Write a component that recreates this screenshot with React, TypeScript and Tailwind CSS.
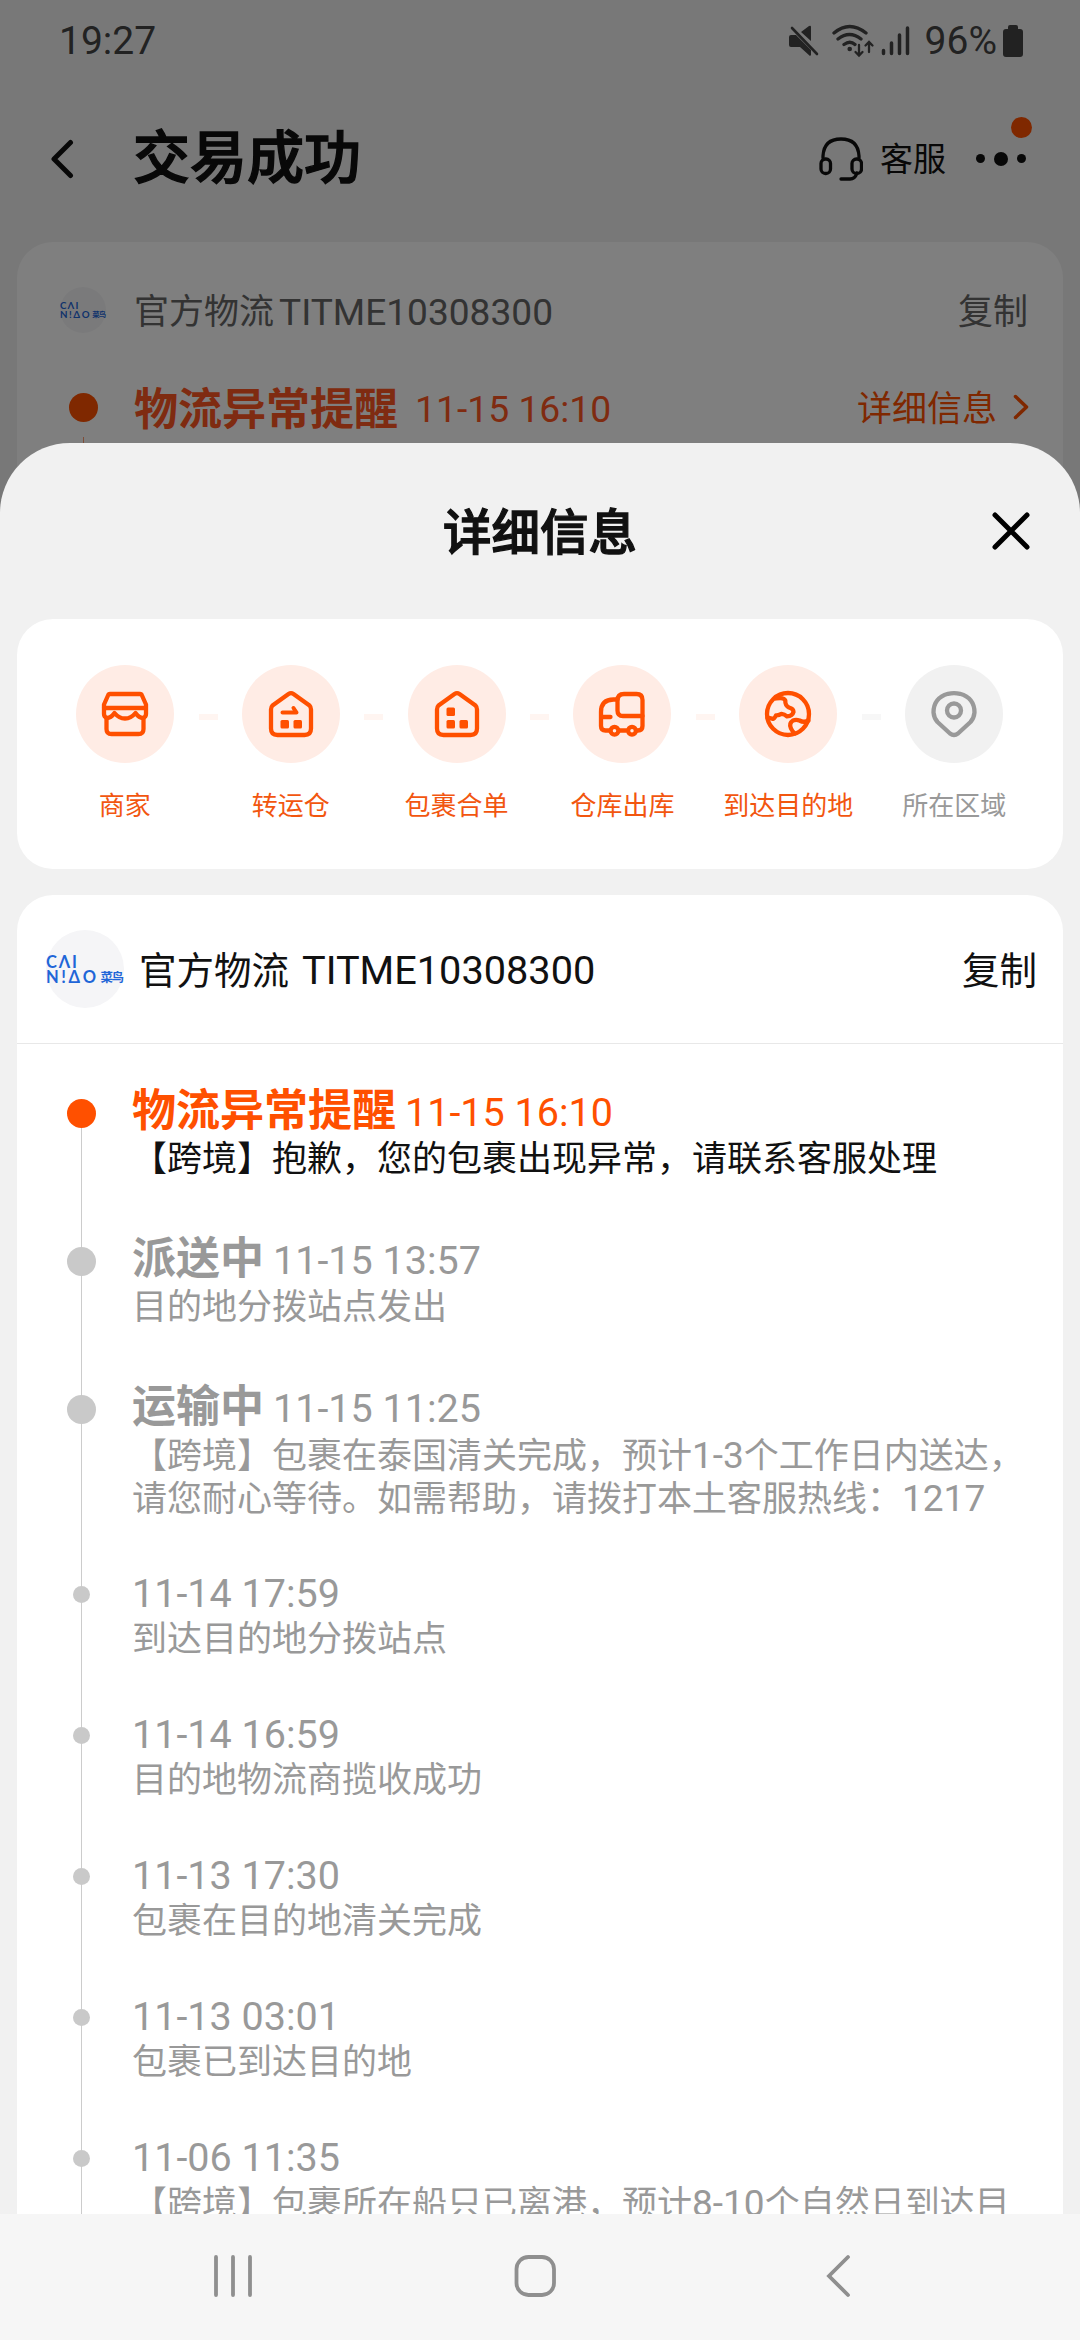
import type { ReactNode } from "react";

const steps = [
  { label: "商家", icon: "shop" },
  { label: "转运仓", icon: "transfer" },
  { label: "包裹合单", icon: "merge" },
  { label: "仓库出库", icon: "truck" },
  { label: "到达目的地", icon: "globe" },
  { label: "所在区域", icon: "pin" },
];

type LogItem = {
  title?: string;
  time: string;
  lines: ReactNode[];
  active?: boolean;
};

const Num = ({ children }: { children: ReactNode }) => (
  <span className="text-[37px]">{children}</span>
);

const logs: LogItem[] = [
  {
    title: "物流异常提醒",
    time: "11-15 16:10",
    lines: ["【跨境】抱歉，您的包裹出现异常，请联系客服处理"],
    active: true,
  },
  { title: "派送中", time: "11-15 13:57", lines: ["目的地分拨站点发出"] },
  {
    title: "运输中",
    time: "11-15 11:25",
    lines: [
      <>【跨境】包裹在泰国清关完成，预计<Num>1-3</Num>个工作日内送达，</>,
      <>请您耐心等待。如需帮助，请拨打本土客服热线：<Num>1217</Num></>,
    ],
  },
  { time: "11-14 17:59", lines: ["到达目的地分拨站点"] },
  { time: "11-14 16:59", lines: ["目的地物流商揽收成功"] },
  { time: "11-13 17:30", lines: ["包裹在目的地清关完成"] },
  { time: "11-13 03:01", lines: ["包裹已到达目的地"] },
  {
    time: "11-06 11:35",
    lines: [<>【跨境】包裹所在船只已离港，预计<Num>8-10</Num>个自然日到达目</>],
  },
];

const StepIcon = ({ name }: { name: string }) => (
  <svg
    viewBox="0 0 48 48"
    className="size-12"
    fill="none"
    stroke="currentColor"
    strokeWidth="4.3"
    strokeLinejoin="round"
    strokeLinecap="round"
  >
    {name === "shop" && (
      <>
        <path d="M9 4h30q1.500 0 2 1.500L45 14.500V18H3V14.500L7 5.500Q7.500 4 9 4z" />
        <path d="M3 18v6q0 3 3 4 4 0 7.500-5 4.500 5.500 10.500 5.500T34.500 23q3.500 5 7.500 5 3-1 3-4V18" />
        <path d="M5.500 28v11q0 5 5 5h27q5 0 5-5V28" />
      </>
    )}
    {(name === "transfer" || name === "merge") && (
      <>
        <path d="M21.500 4Q24 2.300 26.500 4L42.500 15.500Q44 17 44 19.500V38.500q0 6.500-6.500 6.500h-27Q4 45 4 38.500V19.500Q4 17 5.500 15.500z" />
        <g fill="currentColor" stroke="none">
          <rect x="13.500" y="30" width="8.500" height="8.500" rx="1.500" />
          <rect x="26.500" y="30" width="8.500" height="8.500" rx="1.500" />
          {name === "merge" && <rect x="13.500" y="17.500" width="8.500" height="8.500" rx="1.500" />}
        </g>
        {name === "transfer" && <path d="M15.500 22.500H29.500L26.500 18" strokeWidth="4" />}
      </>
    )}
    {name === "truck" && (
      <>
        <path d="M11.500 40.500H7.500q-4.500 0-4.500-4.500V22Q3 9.500 15.500 9.500H19.500" />
        <path d="M26 4H38.500q6 0 6 6V26H25q-5.500 0-5.500-5.500V10.500Q19.500 4 26 4z" />
        <path d="M44.500 26v10q0 4.500-4.500 4.500h-2M21 40.500h7M4 27h8.500" />
        <circle cx="16.500" cy="40.800" r="3.900" />
        <circle cx="34" cy="40.800" r="3.900" />
      </>
    )}
    {name === "globe" && (
      <>
        <circle cx="24" cy="24" r="21" />
        <path d="M12 8.500Q20 7 21.300 10.500 21 15.500 25 17.500 29.500 18.500 29.500 22 28.500 26 23 26.300 20.500 24 17.500 23.800 15 25.500 12 25.300 10.500 28.500 9 28.800L3.500 27.500M44.500 30.500Q40 33 35.500 30.500 32 29.300 29 30.500 24.500 33.500 27 38.500 28.500 42 31 43.500" />
      </>
    )}
    {name === "pin" && (
      <>
        <path d="M18 3.800Q24 2.300 30 3.800 44.500 8 44.500 22.500 44 28 40.500 32L28 43.500q-4 3-8 0L7.500 32Q4 28 3.500 22.500 3.500 8 18 3.800z" />
        <circle cx="24" cy="20.500" r="7" />
      </>
    )}
  </svg>
);

const Logo = ({ className }: { className: string }) => (
  <div className={`shrink-0 rounded-full bg-[#f5f5f7] ${className}`}>
    <svg viewBox="0 0 78 78" className="size-full overflow-visible font-[Lato,'Noto_Sans_CJK_SC',sans-serif] font-bold" fill="#1f66d8">
      <text x="0" y="38" fontSize="16.500" textLength="31">CΛI</text>
      <text x="0" y="52.700" fontSize="16.500" textLength="50">N!ΔO</text>
      <text x="54.500" y="51.500" fontSize="12.500" textLength="23.500">菜鸟</text>
    </svg>
  </div>
);

const StatusBar = () => (
  <div className="flex h-[81px] items-center justify-between pr-[56px] pl-[59px] text-[39px] text-[#444]">
    <span className="pt-px">19:27</span>
    <div className="flex items-center">
      <svg viewBox="0 0 124 34" className="mr-[13px] h-[34px] w-[124px]" fill="none" stroke="currentColor" strokeWidth="3.300" strokeLinecap="round">
        <g fill="currentColor" stroke="none">
          <path d="M3 11h5l15 15v5l-1 1-10-9H3q-2 0-2-2v-8q0-2 2-2zM13 8l8-6q2-1 2 1v14z" />
        </g>
        <path d="M4 4l25 26" strokeWidth="2.600" />
        <path d="M46 9q15.500-13 32 0M50 15q11.500-9 23 0M56 20.500q6-4.500 11 0" />
        <circle cx="61.700" cy="25" r="2.300" fill="currentColor" stroke="none" />
        <path d="M71 21v10M67.500 28l3.500 3.500 3.500-3.500M81 28V19M77.500 21.500L81 18l3.500 3.500" strokeWidth="2.300" />
        <path d="M95.500 26.500v3M103.500 19v10.500M111.500 11v18.500M119.500 4v25.500" strokeWidth="3.500" />
      </svg>
      <span className="pt-px">96%</span>
      <svg viewBox="0 0 22 34" className="ml-[5px] h-[34px] w-[22px]" fill="currentColor">
        <path d="M6 3q0-2 2-2h6q2 0 2 2v2h2q3 0 3 3v22q0 3-3 3H4q-3 0-3-3V8q0-3 3-3h2z" />
      </svg>
    </div>
  </div>
);

const OrderPage = () => (
  <div className="h-full bg-[#f1f1f1]">
    <StatusBar />
    <header className="flex h-[161px] items-start pr-[54px] pl-[50px] text-[#111]">
      <div className="flex h-[155px] w-full items-center">
        <svg viewBox="0 0 24 40" className="h-10 w-6" fill="none" stroke="currentColor" strokeWidth="5" strokeLinecap="round" strokeLinejoin="round">
          <path d="M20.500 3.500L4 20l16.500 16.500" />
        </svg>
        <h1 className="ml-[59px] text-[57px] leading-none font-medium [-webkit-text-stroke:1.4px]">交易成功</h1>
        <div className="relative ml-auto flex items-center">
          <svg viewBox="0 0 44 44" className="size-11" fill="none" stroke="currentColor" strokeWidth="3.300" strokeLinecap="round">
            <path d="M4 21v-2Q5 2 22 2t18 17v2M38 36q-2 6-7 6H22" />
            <rect x="2" y="22" width="9.500" height="14.500" rx="4.500" />
            <rect x="33" y="22" width="9.500" height="14.500" rx="4.500" />
          </svg>
          <span className="ml-[17px] pt-0.5 text-[33px] leading-none">客服</span>
          <div className="ml-[30px] flex items-center gap-[9px]">
            <i className="size-[9px] rounded-full bg-[#111]" />
            <i className="size-[14px] rounded-full bg-[#111]" />
            <i className="size-[9px] rounded-full bg-[#111]" />
          </div>
          <i className="absolute -top-[20px] -right-[6px] size-[21px] rounded-full bg-[#ff5000]" />
        </div>
      </div>
    </header>
    <section className="mx-[17px] h-80 rounded-[36px] bg-white pt-[45px] pr-[35px] pl-[43px]">
      <div className="flex h-[46px] items-center text-[35px] text-[#666]">
        <Logo className="size-[46px]" />
        <span className="ml-[28px] pt-1.5">官方物流</span>
        <span className="ml-[5px] pt-1.5 text-[37.100px]">TITME10308300</span>
        <span className="ml-auto pt-1.5">复制</span>
      </div>
      <div className="mt-[44px] flex h-[60px] items-center text-[#ff5722]">
        <i className="ml-[9px] size-[29px] rounded-full bg-[#ff5000]" />
        <span className="ml-[36px] pt-1.5 text-[44px] font-bold">物流异常提醒</span>
        <span className="ml-[17px] pt-1.5 text-[37.300px]">11-15 16:10</span>
        <span className="ml-auto pt-1.5 text-[35px] text-[#ff5000]">详细信息</span>
        <svg viewBox="0 0 16 26" className="mr-[-1px] ml-[16px] h-[26px] w-4" fill="none" stroke="#ff5000" strokeWidth="3.500" strokeLinecap="round" strokeLinejoin="round">
          <path d="M2.500 2.500L13.500 13l-11 10.500" />
        </svg>
      </div>
      <div className="ml-[23px] h-20 w-px bg-[#ff9a70]" />
    </section>
  </div>
);

const Steps = () => (
  <section className="mx-[17px] flex h-[250px] shrink-0 justify-between rounded-[36px] bg-white pt-[46px] pr-[26px] pl-[25px]">
    {steps.map((step, i) => {
      const last = i === steps.length - 1;
      return (
        <div
          key={step.label}
          className={`relative flex w-[165.600px] flex-col items-center ${last ? "text-[#999]" : "text-[#ff5000]"}`}
        >
          <div className={`flex size-[98px] items-center justify-center rounded-full ${last ? "bg-[#f1f1f1]" : "bg-[#ffece5]"}`}>
            <StepIcon name={step.icon} />
          </div>
          <span className={`mt-[24px] text-[26px] leading-[38px] whitespace-nowrap ${last ? "" : "text-[#f2560f]"}`}>{step.label}</span>
          {!last && (
            <i className={`absolute top-[49px] -right-[10px] h-1.5 w-[19px] ${i === 4 ? "bg-[#f7f7f7]" : "bg-[#fff5f1]"}`} />
          )}
        </div>
      );
    })}
  </section>
);

const Timeline = () => (
  <div className="relative pt-[41px]">
    <div className="absolute top-[70px] bottom-0 left-[64px] w-px bg-[#ccc]" />
    {logs.map((log) => (
      <div key={log.time} className="relative flex pb-[52px]">
        <div className={`ml-[50px] flex w-[29px] shrink-0 items-center justify-center ${log.title ? "h-[57px]" : "h-[45px]"}`}>
          <i
            className={`rounded-full ${log.title ? "size-[29px]" : "size-[17px]"} ${log.active ? "bg-[#ff5000]" : "bg-[#c9c9c9]"}`}
          />
        </div>
        <div className={`ml-[36px] whitespace-nowrap ${log.active ? "text-[#ff5000]" : "text-[#999]"}`}>
          <div className={`flex items-baseline ${log.title ? "h-[53px] leading-[52px]" : "h-[46px] leading-[43px]"}`}>
            {log.title && <b className="mr-[9px] text-[44px]">{log.title}</b>}
            <span className="text-[39.500px]">{log.time}</span>
          </div>
          {log.lines.map((line, i) => (
            <p key={i} className={`h-[43px] text-[35px] leading-[43px] ${log.active ? "text-[#111]" : ""}`}>
              {line}
            </p>
          ))}
        </div>
      </div>
    ))}
  </div>
);

const DetailSheet = () => (
  <div className="absolute inset-x-0 top-[443px] bottom-[126px] flex flex-col overflow-hidden rounded-t-[70px] bg-[#f1f1f1]">
    <div className="relative flex h-[176px] shrink-0 items-center justify-center text-[#111]">
      <h2 className="pt-1.5 text-[48.500px] font-medium [-webkit-text-stroke:1.3px]">详细信息</h2>
      <svg viewBox="0 0 38 38" className="absolute top-[69px] right-[50px] size-[38px]" stroke="#000" strokeWidth="5" strokeLinecap="round">
        <path d="M3 3l32 32M35 3L3 35" />
      </svg>
    </div>
    <Steps />
    <section className="mx-[17px] mt-[26px] rounded-t-[36px] bg-white">
      <div className="flex h-[149px] items-center border-b border-[#e8e8e8] pr-[26px] pl-[29px] text-[37.500px] text-[#111]">
        <Logo className="size-[78px]" />
        <span className="ml-[15px] pt-1">官方物流</span>
        <span className="ml-[13px] pt-1 text-[39.700px]">TITME10308300</span>
        <span className="ml-auto pt-1">复制</span>
      </div>
      <Timeline />
    </section>
  </div>
);

const NavBar = () => (
  <nav className="absolute inset-x-0 bottom-0 h-[126px] bg-[#f6f6f6]">
    <svg viewBox="0 0 1080 126" className="size-full" fill="none" stroke="#8f8f8f" strokeWidth="3.800" strokeLinecap="round">
      <path d="M216 43v38M233 43v38M250 43v38" />
      <rect x="516.500" y="43" width="37.500" height="38" rx="12" />
      <path d="M848 43L829 62l19 19" />
    </svg>
  </nav>
);

export default function App() {
  return (
    <div className="relative h-[2340px] w-[1080px] overflow-hidden font-[Roboto,'Noto_Sans_CJK_SC',sans-serif]">
      <OrderPage />
      <div className="absolute inset-0 bg-black/50" />
      <DetailSheet />
      <NavBar />
    </div>
  );
}
